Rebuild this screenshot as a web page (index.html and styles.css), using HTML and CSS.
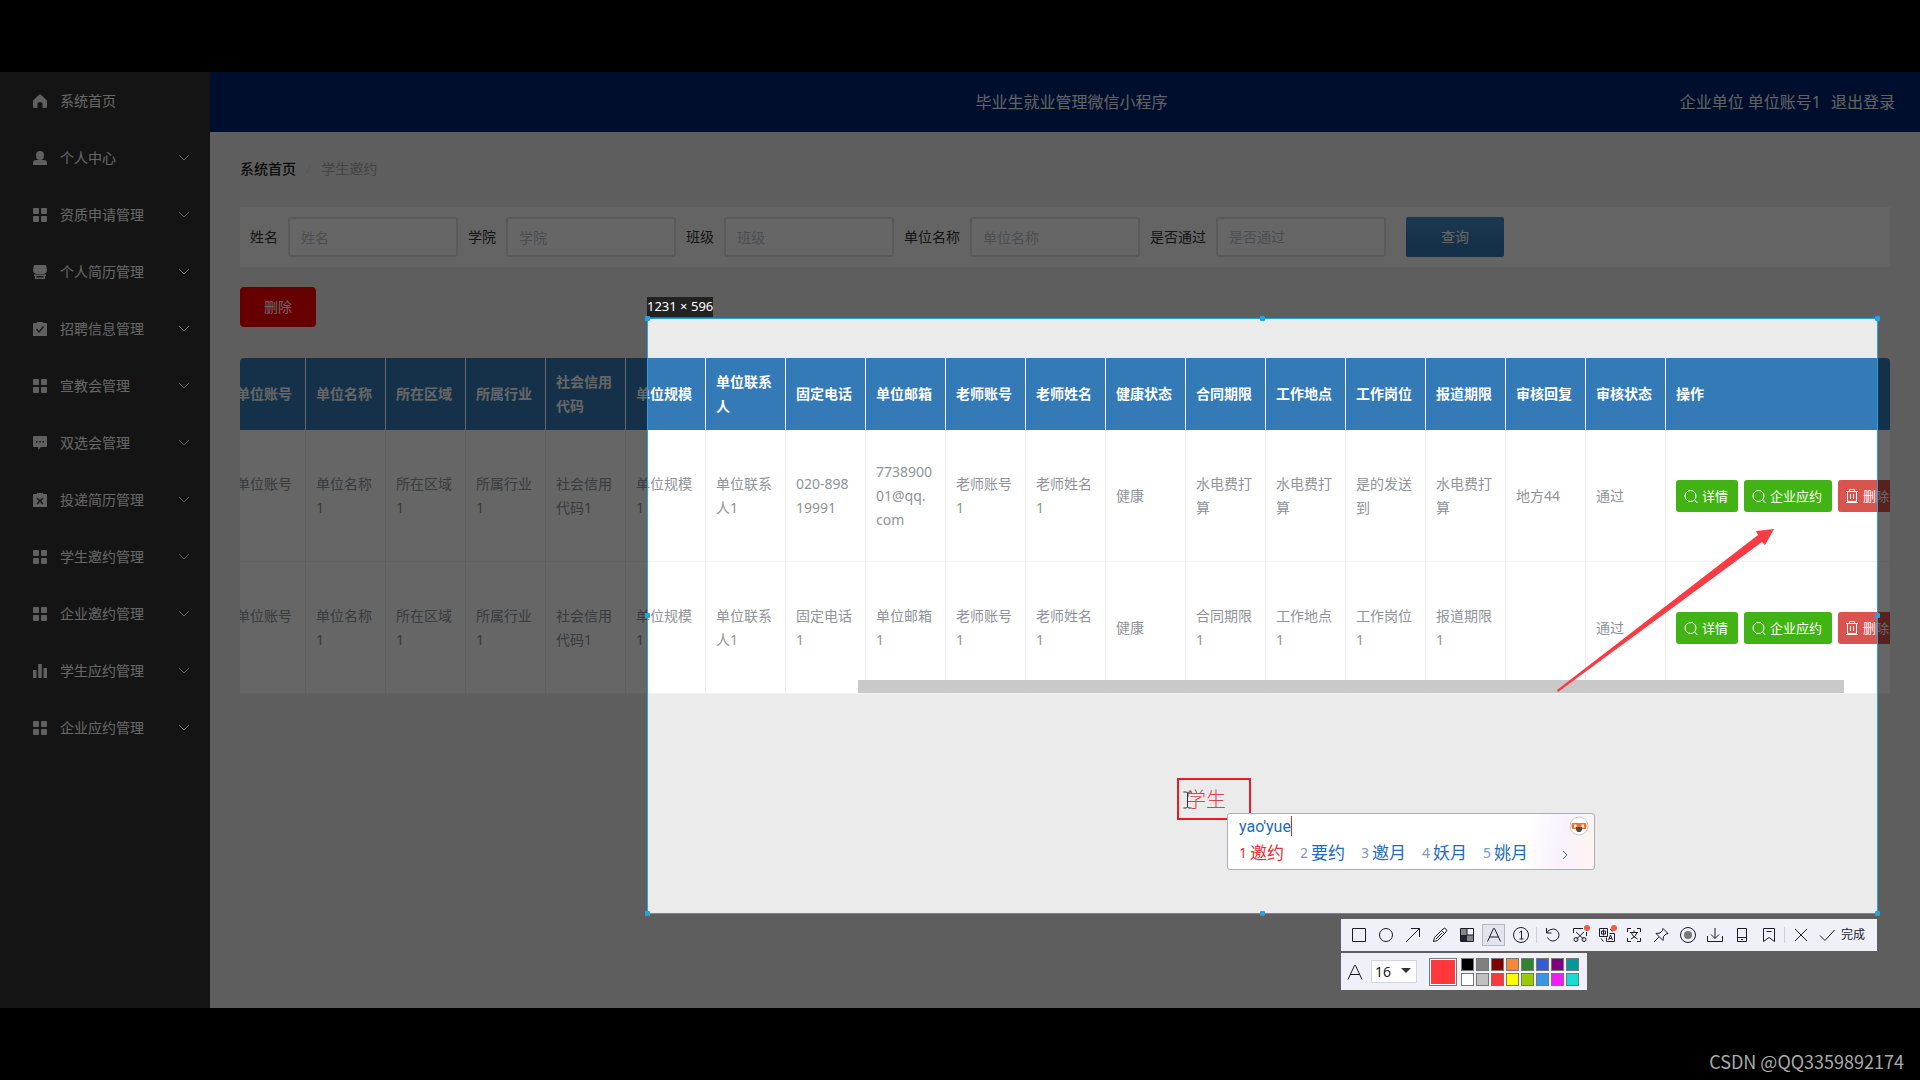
FILE: index.html
```html
<!DOCTYPE html>
<html lang="zh-CN">
<head>
<meta charset="utf-8">
<title>毕业生就业管理微信小程序</title>
<link rel="stylesheet" href="styles.css">
</head>
<body>
<svg class="sprite" aria-hidden="true">
  <symbol id="grid" viewBox="0 0 14 14"><path d="M1 0h4q1 0 1 1v4q0 1-1 1H1q-1 0-1-1V1q0-1 1-1zM9 0h4q1 0 1 1v4q0 1-1 1H9q-1 0-1-1V1q0-1 1-1zM1 8h4q1 0 1 1v4q0 1-1 1H1q-1 0-1-1V9q0-1 1-1zM9 8h4q1 0 1 1v4q0 1-1 1H9q-1 0-1-1V9q0-1 1-1z"/></symbol>
  <symbol id="home" viewBox="0 0 14 14"><path d="M7 0l7 6.500V13q0 1-1 1H9.500V9.500q0-1.500-2.500-1.500t-2.500 1.500V14H1q-1 0-1-1V6.500z"/></symbol>
  <symbol id="user" viewBox="0 0 14 14"><path d="M7 0a4 4 0 0 1 4 4v1a4 4 0 0 1-8 0V4a4 4 0 0 1 4-4zM0 14v-2q0-3 3-3h8q3 0 3 3v2z"/></symbol>
  <symbol id="shop" viewBox="0 0 14 14"><path d="M1 0h12l1 5q0 3-2 3.500L11 9H3L2 8.500Q0 8 0 5zM1 9.500h12V11H1zM2 11h1.500v1.500h7V11H12v3H2z"/></symbol>
  <symbol id="check" viewBox="0 0 14 14"><path fill-rule="evenodd" d="M1 1h3V0h6v1h3q1 0 1 1v12H0V2q0-1 1-1zM3 7.500l3 3.500 5-6-1-1-4 5-2-2.500z"/></symbol>
  <symbol id="cross" viewBox="0 0 14 14"><path fill-rule="evenodd" d="M1 1h3V0h6v1h3q1 0 1 1v12H0V2q0-1 1-1zM3.500 5.500l2.500 2.500-2.500 2.500 1 1L7 9l2.500 2.500 1-1L8 8l2.500-2.500-1-1L7 7 4.500 4.500z"/></symbol>
  <symbol id="chat" viewBox="0 0 14 14"><path fill-rule="evenodd" d="M1 0h12q1 0 1 1v9q0 1-1 1H8l-2.500 3L5 11H1q-1 0-1-1V1q0-1 1-1zM3 5v1.500h1.500V5zM6.300 5v1.500h1.500V5zM9.500 5v1.500H11V5z"/></symbol>
  <symbol id="bars" viewBox="0 0 14 14"><path d="M0 6h3.500v8H0zM5.200 0h3.600v14H5.200zM10.500 4H14v10h-3.500z"/></symbol>
  <symbol id="chevron" viewBox="0 0 12 8"><path class="line" d="M1 1l5 5 5-5"/></symbol>
  <symbol id="search" viewBox="0 0 14 14"><circle class="line" cx="6.500" cy="7" r="5.500"/><path class="line" d="M10.500 11l3 3"/></symbol>
  <symbol id="trash" viewBox="0 0 14 14"><path class="line" d="M1 2.500h12M4.500 2.500v-2h5v2M2.500 2.500v10h9v-10M5.500 5v5M8.500 5v5M1 13.500h12"/></symbol>
</svg>
<div class="screen">
  <div class="app">
    <nav class="sidebar">
      <a href="#"><svg><use href="#home"/></svg><span>系统首页</span></a>
      <a href="#"><svg><use href="#user"/></svg><span>个人中心</span><svg class="chev"><use href="#chevron"/></svg></a>
      <a href="#"><svg><use href="#grid"/></svg><span>资质申请管理</span><svg class="chev"><use href="#chevron"/></svg></a>
      <a href="#"><svg><use href="#shop"/></svg><span>个人简历管理</span><svg class="chev"><use href="#chevron"/></svg></a>
      <a href="#"><svg><use href="#check"/></svg><span>招聘信息管理</span><svg class="chev"><use href="#chevron"/></svg></a>
      <a href="#"><svg><use href="#grid"/></svg><span>宣教会管理</span><svg class="chev"><use href="#chevron"/></svg></a>
      <a href="#"><svg><use href="#chat"/></svg><span>双选会管理</span><svg class="chev"><use href="#chevron"/></svg></a>
      <a href="#"><svg><use href="#cross"/></svg><span>投递简历管理</span><svg class="chev"><use href="#chevron"/></svg></a>
      <a href="#"><svg><use href="#grid"/></svg><span>学生邀约管理</span><svg class="chev"><use href="#chevron"/></svg></a>
      <a href="#"><svg><use href="#grid"/></svg><span>企业邀约管理</span><svg class="chev"><use href="#chevron"/></svg></a>
      <a href="#"><svg><use href="#bars"/></svg><span>学生应约管理</span><svg class="chev"><use href="#chevron"/></svg></a>
      <a href="#"><svg><use href="#grid"/></svg><span>企业应约管理</span><svg class="chev"><use href="#chevron"/></svg></a>
    </nav>
    <div class="content">
      <header class="topbar">
        <h1>毕业生就业管理微信小程序</h1>
        <div class="account"><span>企业单位 单位账号1</span><a href="#">退出登录</a></div>
      </header>
      <main>
        <div class="crumbs"><a href="#">系统首页</a><i>/</i><span>学生邀约</span></div>
        <form class="filters">
          <label for="f1">姓名</label><input id="f1" placeholder="姓名">
          <label for="f2">学院</label><input id="f2" placeholder="学院">
          <label for="f3">班级</label><input id="f3" placeholder="班级">
          <label for="f4">单位名称</label><input id="f4" placeholder="单位名称">
          <label for="f5">是否通过</label><select id="f5"><option>是否通过</option></select>
          <button type="button" class="query">查询</button>
        </form>
        <button type="button" class="remove">删除</button>
        <div class="grid-wrap">
          <table>
            <colgroup><col span="18" class="narrow"><col class="ops"></colgroup>
            <thead><tr><th>单位账号</th><th>单位名称</th><th>所在区域</th><th>所属行业</th><th>社会信用代码</th><th>单位规模</th><th>单位联系人</th><th>固定电话</th><th>单位邮箱</th><th>老师账号</th><th>老师姓名</th><th>健康状态</th><th>合同期限</th><th>工作地点</th><th>工作岗位</th><th>报道期限</th><th>审核回复</th><th>审核状态</th><th>操作</th></tr></thead>
            <tbody>
              <tr><td>单位账号<br>&nbsp;</td><td>单位名称1</td><td>所在区域1</td><td>所属行业1</td><td>社会信用代码1</td><td>单位规模1</td><td>单位联系人1</td><td>020-89819991</td><td>773890001@qq.<br>com</td><td>老师账号1</td><td>老师姓名1</td><td>健康</td><td>水电费打算</td><td>水电费打算</td><td>是的发送到</td><td>水电费打算</td><td>地方44</td><td>通过</td>
                <td><div class="actions"><button type="button"><svg><use href="#search"/></svg>详情</button><button type="button"><svg><use href="#search"/></svg>企业应约</button><button type="button" class="danger"><svg><use href="#trash"/></svg>删除</button></div></td></tr>
              <tr><td>单位账号<br>&nbsp;</td><td>单位名称1</td><td>所在区域1</td><td>所属行业1</td><td>社会信用代码1</td><td>单位规模1</td><td>单位联系人1</td><td>固定电话1</td><td>单位邮箱1</td><td>老师账号1</td><td>老师姓名1</td><td>健康</td><td>合同期限1</td><td>工作地点1</td><td>工作岗位1</td><td>报道期限1</td><td></td><td>通过</td>
                <td><div class="actions"><button type="button"><svg><use href="#search"/></svg>详情</button><button type="button"><svg><use href="#search"/></svg>企业应约</button><button type="button" class="danger"><svg><use href="#trash"/></svg>删除</button></div></td></tr>
            </tbody>
          </table>
          <div class="scrollbar"></div>
        </div>
      </main>
    </div>

    <div class="selection">
      <span class="size">1231 × 596</span>
      <i class="dot tl"></i><i class="dot tc"></i><i class="dot tr"></i><i class="dot ml"></i><i class="dot mr"></i><i class="dot bl"></i><i class="dot bc"></i><i class="dot br"></i>
      <svg class="arrow" viewBox="0 0 218 163"><path d="M0 161L201 6l-2-4L217 0l-9 16-3-3L1 163z"/></svg>
      <div class="note">学生
        <svg class="ibeam" viewBox="0 0 9 18"><path d="M0.500 1h3l1 1 1-1h3M4.500 2v14M0.500 17h3l1-1 1 1h3"/></svg>
      </div>
      <div class="ime">
        <div class="typed">yao'yue</div>
        <ol><li class="first"><b>1</b>邀约</li><li><b>2</b>要约</li><li><b>3</b>邀月</li><li><b>4</b>妖月</li><li><b>5</b>姚月</li></ol>
        <svg class="next" viewBox="0 0 6 10"><path d="M1 1l4 4-4 4"/></svg>
        <svg class="mascot" viewBox="0 0 20 20"><circle cx="10" cy="10" r="9" fill="#fff" stroke="#c8c8dc"/><path d="M4 7h12q1.500 0 1.500 2v2q0 2-1.500 2H4q-1.500 0-1.500-2V9Q2.500 7 4 7z" fill="#f0712a"/><path d="M5 8.500h2.500v3H5zM12.500 8.500H15v3h-2.500z" fill="#fff2d8"/><path d="M7 11h6v3l-1.500 2h-3L7 14z" fill="#56484c"/></svg>
      </div>
      <div class="tools">
        <div class="toolbar">
          <button type="button" aria-label="矩形"><svg viewBox="0 0 20 20"><path d="M3.500 3.500h13v13h-13z"/></svg></button>
          <button type="button" aria-label="椭圆"><svg viewBox="0 0 20 20"><circle cx="10" cy="10" r="6.500"/></svg></button>
          <button type="button" aria-label="箭头"><svg viewBox="0 0 20 20"><path d="M3 17L16.500 3.500M8 3.500h8.500V12"/></svg></button>
          <button type="button" aria-label="画笔"><svg viewBox="0 0 20 20"><path d="M3.500 16.500l1-4L13 4q1.500-1.500 3 0t0 3L7.500 15.500zM11.500 5.500l3 3M6 14l6-6"/></svg></button>
          <button type="button" aria-label="马赛克"><svg viewBox="0 0 20 20"><path fill="#888" stroke="none" d="M4 4h6v6H4zM10 10h6v6h-6z"/><path fill="#223" stroke="none" d="M4 10h6v6H4z"/><path d="M3.500 3.500h13v13h-13zM10 3.500V10h6.500"/></svg></button>
          <button type="button" aria-label="文字" class="on"><svg viewBox="0 0 20 20"><path d="M3.500 16.500L9.500 3.500h1l6 13M5.500 12h9"/></svg></button>
          <button type="button" aria-label="序号"><svg viewBox="0 0 20 20"><circle cx="10" cy="10" r="7.500"/><path d="M8.500 7.500L10.500 6v8M8.500 14h4"/></svg></button>
          <i class="sep"></i>
          <button type="button" aria-label="撤销"><svg viewBox="0 0 20 20"><path d="M3.500 3v5h5M3.500 8q2-4 7-4a6 6 0 1 1-6 8.500"/></svg></button>
          <button type="button" aria-label="裁剪"><svg viewBox="0 0 20 20"><path d="M3.500 8V3.500H13M16.500 7v4M6 7l7.500 7M14 7l-7.500 7"/><circle cx="6" cy="14.500" r="2"/><circle cx="14" cy="14.500" r="2"/><circle class="new" cx="17" cy="3" r="3"/></svg></button>
          <button type="button" aria-label="翻译"><svg viewBox="0 0 20 20"><path d="M2.500 3.500h8v8h-8zM4.500 6h4v3h-4zM6.500 4.500v6M12.500 8.500H17.500v8h-8v-4M11.500 15l2-5 2 5M12.500 13.500h2M4 13.500l2.500 3M13 4l3 2.500"/><circle class="new" cx="17" cy="3" r="3"/></svg></button>
          <button type="button" aria-label="识别"><svg viewBox="0 0 20 20"><path d="M3.500 7V3.500H7M13 3.500h3.500V7M16.500 13v3.500H13M7 16.500H3.500V13M6 7.500h8M10 5.500v2M7 14q5-2 6-6.500M7.500 8q1 4 6 6"/></svg></button>
          <button type="button" aria-label="钉住"><svg viewBox="0 0 20 20"><path d="M12 3.500l5 5-2 .5-2.500 2.500-.5 4-7-7 4-.5L11.500 5.500zM8 12l-5 5"/></svg></button>
          <button type="button" aria-label="录屏"><svg viewBox="0 0 20 20"><circle cx="10" cy="10" r="7.500"/><circle cx="10" cy="10" r="4" fill="#777" stroke="none"/></svg></button>
          <button type="button" aria-label="保存"><svg viewBox="0 0 20 20"><path d="M10 3v10M6 9.500l4 4 4-4M2.500 11v5.500h15V11"/></svg></button>
          <button type="button" aria-label="手机"><svg viewBox="0 0 20 20"><path d="M5.500 3.500h9v13h-9zM5.500 12.500h9M9 14.500h2"/></svg></button>
          <button type="button" aria-label="收藏"><svg viewBox="0 0 20 20"><path d="M4.500 3.500h11v13L10 12.500l-5.500 4zM7.500 6.500h5"/></svg></button>
          <i class="sep"></i>
          <button type="button" aria-label="取消"><svg viewBox="0 0 20 20"><path d="M4 4l12 12M16 4L4 16"/></svg></button>
          <button type="button" class="done"><svg viewBox="0 0 20 20"><path d="M3 10.500l5 5L17.500 5"/></svg>完成</button>
        </div>
        <div class="options">
          <svg viewBox="0 0 20 20"><path d="M3 17.500L9.500 3.500h1l6.500 14M5 12.500h10"/></svg>
          <div class="font-size"><select aria-label="字号"><option>16</option></select></div>
          <button type="button" class="current" aria-label="当前颜色"></button>
          <div class="palette">
            <button type="button" class="c1" aria-label="黑"></button><button type="button" class="c2" aria-label="灰"></button><button type="button" class="c3" aria-label="深红"></button><button type="button" class="c4" aria-label="橙"></button><button type="button" class="c5" aria-label="绿"></button><button type="button" class="c6" aria-label="蓝"></button><button type="button" class="c7" aria-label="紫"></button><button type="button" class="c8" aria-label="青"></button>
            <button type="button" class="c9" aria-label="白"></button><button type="button" class="c10" aria-label="浅灰"></button><button type="button" class="c11" aria-label="红"></button><button type="button" class="c12" aria-label="黄"></button><button type="button" class="c13" aria-label="草绿"></button><button type="button" class="c14" aria-label="天蓝"></button><button type="button" class="c15" aria-label="品红"></button><button type="button" class="c16" aria-label="浅青"></button>
          </div>
        </div>
      </div>
    </div>
  </div>
  <footer>CSDN @QQ3359892174</footer>
</div>
</body>
</html>
```
FILE: styles.css
```css
* { box-sizing: border-box; }
body { margin: 0; background: #000; font: 14px/24px "Noto Sans", "Noto Sans CJK SC", sans-serif; }
button, input, select { font: inherit; margin: 0; }
button { border: 0; padding: 0; }
a { color: inherit; text-decoration: none; }
i { font-style: normal; }
.sprite { position: absolute; width: 0; height: 0; }
.line { fill: none; stroke: currentColor; }

.screen { display: grid; grid-template-rows: 72px 1fr 72px; min-height: 100vh; }
.app { grid-row: 2; position: relative; display: flex; overflow: hidden; background: #ebebeb; }

.sidebar { width: 210px; flex: none; background: #333; color: #fff; padding-top: 1px; display: flex; flex-direction: column; gap: 1px; }
.sidebar a { height: 56px; display: flex; align-items: center; gap: 13px; padding: 0 20px 0 33px; }
.sidebar svg { width: 14px; height: 14px; fill: #f0f0f0; flex: none; }
.sidebar .chev { width: 12px; height: 8px; margin-left: auto; }

.content { flex: 1; min-width: 0; }
.topbar { height: 60px; background: #002570; color: #f4f4f4; font-size: 16px; display: grid; grid-template-columns: 1fr auto 1fr; align-items: center; padding: 0 25px 0 38px; }
.topbar h1 { grid-column: 2; margin: 0; font: inherit; }
.account { display: flex; gap: 10px; justify-content: flex-end; }
main { padding: 0 30px; }
.crumbs { height: 75px; display: flex; align-items: center; gap: 10px; padding-bottom: 2px; color: #aaa; }
.crumbs a { color: #222; font-weight: 500; }
.crumbs i { color: #ddd; }
.filters { display: flex; align-items: center; gap: 10px; height: 60px; padding: 0 10px; background: #fbfbfb; color: #333; }
.filters input, .filters select { width: 170px; height: 40px; padding: 0 11px; border: 2px solid #e0e0e0; border-radius: 3px; background: #fff; color: #c0c4cc; outline: 0; appearance: none; }
.filters ::placeholder { color: #c0c4cc; opacity: 1; }
.query { width: 98px; height: 40px; margin-left: 10px; border-radius: 2px; background: linear-gradient(#4a8fca, #337ab7 70%); color: #fff; }
.remove { width: 76px; height: 40px; margin-top: 20px; border-radius: 4px; background: #f00; color: #fff; display: block; }

.grid-wrap { position: relative; margin-top: 31px; overflow: hidden; background: #fff; border-radius: 4px 4px 0 0; }
table { table-layout: fixed; width: 1740px; margin-left: -14px; border-spacing: 0; color: #909399; }
.narrow { width: 80px; }
.ops { width: 300px; }
th, td { padding: 0 10px; text-align: left; vertical-align: middle; word-break: break-all; }
th { height: 72px; background: #337ab7; color: #fff; border-right: 1px solid #fff; }
td { height: 132px; padding-top: 1px; border-right: 1px solid #eee; border-bottom: 1px solid #f2f2f2; }
.actions { display: flex; gap: 6px; }
.actions button { flex: none; display: flex; align-items: center; gap: 4px; height: 32px; padding: 0 10px 0 8px; border-radius: 3px; background: #42b314; color: #fff; font-size: 13px; }
.actions .danger { background: #d9534f; padding-left: 7px; }
.actions svg { width: 14px; height: 14px; }
.scrollbar { position: absolute; left: 618px; right: 46px; bottom: 1px; height: 13px; background: #c9c9c9; }

.selection { position: absolute; left: 647px; top: 246px; width: 1231px; height: 596px; border: 1px solid #24a3e3; box-shadow: 0 0 0 2000px rgba(0, 0, 0, .6); }
.size { position: absolute; left: -1px; bottom: 100%; margin-bottom: 2px; height: 20px; line-height: 18px; font-size: 13px; white-space: nowrap; background: #222; color: #fff; }
.dot { position: absolute; width: 5px; height: 5px; border-radius: 1px; background: #24a3e3; }
.tl, .tc, .tr { top: -3px; }
.bl, .bc, .br { bottom: -3px; }
.tl, .ml, .bl { left: -3px; }
.tr, .mr, .br { right: -3px; }
.tc, .bc { left: 612px; }
.ml, .mr { top: 294px; }
.arrow { position: absolute; left: 909px; top: 210px; width: 218px; height: 163px; fill: #fb3b44; }
.note { position: absolute; left: 529px; top: 459px; width: 74px; height: 42px; border: 2px solid #e81c28; color: #e0404c; font-size: 20px; line-height: 40px; padding-left: 7px; font-weight: 300; }
.ibeam { position: absolute; left: 4px; top: 11px; width: 9px; height: 18px; fill: none; stroke: #333; }
.ime { position: absolute; left: 579px; top: 494px; width: 368px; height: 57px; padding: 2px 11px; border: 1px solid #a9b0bb; border-radius: 3px; background: linear-gradient(100deg, #fff 80%, #f8f2fd 90%, #fff4f0); color: #1f6cb8; }
.typed { width: fit-content; height: 20px; line-height: 22px; border-right: 1px solid #e22; font-family: Roboto, sans-serif; font-size: 16px; }
.ime ol { display: flex; gap: 16px; margin: 5px 0 0; padding: 0; list-style: none; font-size: 17px; }
.ime li { display: flex; gap: 3px; white-space: nowrap; }
.ime b { width: 8px; font-size: 14px; font-weight: 400; color: #7f96ba; }
.ime .first, .first b { color: #ea2f35; }
.next { position: absolute; right: 26px; top: 36px; width: 6px; height: 10px; fill: none; stroke: #456ea0; }
.mascot { position: absolute; right: 5px; top: 2px; width: 20px; height: 20px; }

.tools { position: absolute; left: 693px; top: 600px; width: 536px; }
.tools svg { width: 20px; height: 20px; fill: none; stroke: #1b1b2c; flex: none; }
.tools .new { fill: #ee5a42; stroke: none; }
.toolbar, .options { background: #f0f0f8; display: flex; align-items: center; }
.toolbar { height: 32px; padding-left: 4px; }
.toolbar button { width: 27px; height: 20px; background: none; display: flex; justify-content: center; align-items: center; }
.toolbar .on { width: 21px; margin: 0 3px; background: #e3e3ec; outline: 1px solid #b5b5c5; }
.sep { width: 1px; height: 16px; margin: 0 2px; background: #d0d0da; }
.toolbar .done { width: auto; gap: 4px; margin-left: 3px; font-size: 12px; color: #1b1b2c; }
.options { width: 246px; height: 37px; margin-top: 2px; padding-left: 4px; }
.font-size { position: relative; margin: 0 12px 0 6px; }
.font-size::after { content: ""; position: absolute; right: 6px; top: 8px; border: 5px solid transparent; border-top-color: #333; border-bottom: 0; }
.font-size select { display: block; width: 46px; height: 23px; padding: 0 3px; border: 1px solid #d4d4de; background: #fff; color: #222; font-size: 14px; line-height: 20px; appearance: none; }
.current { width: 28px; height: 28px; border: 1px solid #777; box-shadow: inset 0 0 0 1px #fff; background: #ff383c; }
.palette { display: grid; grid-template-columns: repeat(8, 13px); gap: 2px; margin-left: 4px; }
.palette button { height: 13px; border: 1px solid #777; }
.c1 { background: #000; } .c2 { background: #808080; } .c3 { background: #800000; } .c4 { background: #f7883a; }
.c5 { background: #308430; } .c6 { background: #385ad3; } .c7 { background: #800080; } .c8 { background: #009a9a; }
.c9 { background: #fff; } .c10 { background: #c0c0c0; } .c11 { background: #fb3838; } .c12 { background: #ff0; }
.c13 { background: #99cc00; } .c14 { background: #3894e4; } .c15 { background: #f31bf3; } .c16 { background: #16dcd2; }

footer { grid-row: 3; padding: 42px 16px 0; text-align: right; color: #aaa; font: 18px/22px "Noto Sans CJK SC", sans-serif; }
```
